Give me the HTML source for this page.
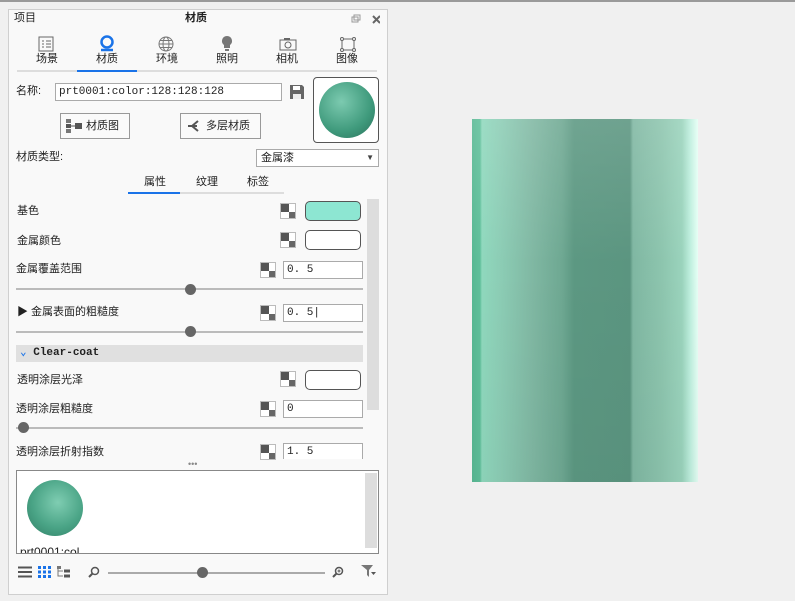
<!DOCTYPE html>
<html><head><meta charset="utf-8"><style>
*{box-sizing:border-box;margin:0;padding:0}
body{width:795px;height:601px;background:#f0f0f0;position:relative;overflow:hidden;font-family:"Liberation Sans","Noto Sans CJK SC",sans-serif;font-size:11px;color:#222;line-height:13px}
.a{position:absolute}
.panel{left:8px;top:9px;width:380px;height:586px;background:#f9f9f9;border:1px solid #cfcfcf}
.inp{background:#fff;border:1px solid #aaa;height:18px;font-family:"Liberation Mono","Noto Sans CJK SC",monospace;font-size:11px;padding-left:3px;line-height:16px}
.btn{background:#fafafa;border:1px solid #999;height:26px;line-height:24px;font-size:11px}
.sw{width:56px;height:20px;border:1px solid #555;border-radius:5px;background:#fff}
.chk{width:16px;height:16px;background:linear-gradient(90deg,#555 50%,#fff 50%) 0 0/16px 8px no-repeat,linear-gradient(90deg,#fff 50%,#666 50%) 0 8px/16px 8px no-repeat;border:1px solid #bbb}
.sl{height:2px;background:#bbb}
.knob{width:11px;height:11px;border-radius:50%;background:#666}
.lbl{font-size:11px;line-height:13px}
</style></head><body>
<div class="a" style="left:0;top:0;width:795px;height:2px;background:#9a9a9a"></div>
<div class="a panel"></div>
<div class="a lbl" style="left:14px;top:12px">项目</div>
<div class="a lbl" style="left:185px;top:12px;font-weight:bold">材质</div>
<svg class="a" style="left:350px;top:14px" width="30" height="12"><rect x="2" y="3" width="6" height="5" fill="none" stroke="#999"/><rect x="4" y="1" width="6" height="5" fill="none" stroke="#999"/><path d="M23 2l7 7M30 2l-7 7" stroke="#666" stroke-width="2"/></svg>
<svg class="a" style="left:38px;top:36px" width="16" height="16"><rect x="1" y="1" width="14" height="14" fill="none" stroke="#666"/><path d="M4 5h2M8 5h5M4 8h2M8 8h5M4 11h2M8 11h5" stroke="#666"/></svg>
<svg class="a" style="left:99px;top:35px" width="16" height="18"><circle cx="8" cy="7" r="5.5" fill="none" stroke="#1a73e8" stroke-width="2.5"/><path d="M2 15h12" stroke="#1a73e8" stroke-width="2.5"/></svg>
<svg class="a" style="left:158px;top:36px" width="16" height="16"><circle cx="8" cy="8" r="7" fill="none" stroke="#777"/><ellipse cx="8" cy="8" rx="3" ry="7" fill="none" stroke="#777"/><path d="M1 8h14M2 4.5h12M2 11.5h12" stroke="#777"/></svg>
<svg class="a" style="left:221px;top:35px" width="12" height="18"><path d="M6 1a5 5 0 0 1 3 9v3H3v-3A5 5 0 0 1 6 1z" fill="#777"/><rect x="4" y="14" width="4" height="2" fill="#777"/></svg>
<svg class="a" style="left:279px;top:37px" width="18" height="14"><rect x="1" y="3" width="16" height="10" fill="none" stroke="#666"/><rect x="5" y="1" width="6" height="2" fill="#666"/><circle cx="9" cy="8" r="3" fill="none" stroke="#666"/></svg>
<svg class="a" style="left:339px;top:36px" width="18" height="17"><rect x="3" y="3" width="12" height="11" fill="none" stroke="#666"/><g fill="#fff" stroke="#666"><circle cx="3" cy="3" r="1.5"/><circle cx="15" cy="3" r="1.5"/><circle cx="3" cy="14" r="1.5"/><circle cx="15" cy="14" r="1.5"/></g></svg>
<div class="a lbl" style="left:36px;top:53px">场景</div>
<div class="a lbl" style="left:96px;top:53px">材质</div>
<div class="a lbl" style="left:156px;top:53px">环境</div>
<div class="a lbl" style="left:216px;top:53px">照明</div>
<div class="a lbl" style="left:276px;top:53px">相机</div>
<div class="a lbl" style="left:336px;top:53px">图像</div>
<div class="a" style="left:17px;top:70px;width:360px;height:2px;background:#ddd"></div>
<div class="a" style="left:77px;top:70px;width:60px;height:2px;background:#1a73e8"></div>
<div class="a lbl" style="left:16px;top:85px">名称:</div>
<div class="a inp" style="left:55px;top:83px;width:227px">prt0001:color:128:128:128</div>
<svg class="a" style="left:289px;top:84px" width="16" height="16"><path d="M1 1h12l2 2v12H1z" fill="#666"/><rect x="4" y="2" width="7" height="4" fill="#fff"/><rect x="4" y="10" width="8" height="5" fill="#eee"/></svg>
<div class="a" style="left:313px;top:77px;width:66px;height:66px;border:1px solid #555;border-radius:4px;background:#fff"></div>
<div class="a" style="left:319px;top:82px;width:56px;height:56px;border-radius:50%;background:radial-gradient(circle at 40% 35%,#7ccab0,#3f9a7c 60%,#2f7a62 90%)"></div>
<div class="a btn" style="left:60px;top:113px;width:70px"><svg style="position:absolute;left:5px;top:5px" width="16" height="14"><rect x="0" y="0" width="5" height="4" fill="#777"/><rect x="0" y="5" width="5" height="4" fill="#555"/><rect x="0" y="10" width="5" height="4" fill="#777"/><rect x="9" y="4" width="7" height="6" fill="#555"/><path d="M5 7h4" stroke="#555"/></svg><span style="position:absolute;left:25px">材质图</span></div>
<div class="a btn" style="left:180px;top:113px;width:81px"><svg style="position:absolute;left:6px;top:5px" width="16" height="14"><path d="M1 7h9M5 7l6-5M5 7l6 5" stroke="#555" stroke-width="2" fill="none"/></svg><span style="position:absolute;left:25px">多层材质</span></div>
<div class="a lbl" style="left:16px;top:151px">材质类型:</div>
<div class="a" style="left:256px;top:149px;width:123px;height:18px;background:#fff;border:1px solid #aaa;padding-left:4px;line-height:16px">金属漆<span style="position:absolute;right:4px;top:0;font-size:8px;color:#444">▼</span></div>
<div class="a lbl" style="left:144px;top:176px">属性</div>
<div class="a lbl" style="left:196px;top:176px">纹理</div>
<div class="a lbl" style="left:247px;top:176px">标签</div>
<div class="a" style="left:128px;top:192px;width:156px;height:2px;background:#ddd"></div>
<div class="a" style="left:128px;top:192px;width:52px;height:2px;background:#1a73e8"></div>
<div class="a" style="left:367px;top:199px;width:12px;height:211px;background:#ddd"></div>
<div class="a lbl" style="left:17px;top:205px">基色</div>
<div class="a chk" style="left:280px;top:203px"></div>
<div class="a sw" style="left:305px;top:201px;background:#8de6d2"></div>
<div class="a lbl" style="left:17px;top:235px">金属颜色</div>
<div class="a chk" style="left:280px;top:232px"></div>
<div class="a sw" style="left:305px;top:230px"></div>
<div class="a lbl" style="left:16px;top:263px">金属覆盖范围</div>
<div class="a chk" style="left:260px;top:262px"></div>
<div class="a inp" style="left:283px;top:261px;width:80px">0. 5</div>
<div class="a sl" style="left:16px;top:288px;width:347px"></div>
<div class="a knob" style="left:185px;top:284px"></div>
<div class="a lbl" style="left:17px;top:306px">▶ 金属表面的粗糙度</div>
<div class="a chk" style="left:260px;top:305px"></div>
<div class="a inp" style="left:283px;top:304px;width:80px">0. 5|</div>
<div class="a sl" style="left:16px;top:331px;width:347px"></div>
<div class="a knob" style="left:185px;top:326px"></div>
<div class="a" style="left:16px;top:345px;width:347px;height:17px;background:#e0e0e0"></div>
<div class="a" style="left:20px;top:347px;font-family:'Liberation Mono',monospace;font-weight:bold;font-size:11px"><span style="color:#1a73e8">⌄</span> Clear-coat</div>
<div class="a lbl" style="left:17px;top:374px">透明涂层光泽</div>
<div class="a chk" style="left:280px;top:371px"></div>
<div class="a sw" style="left:305px;top:370px"></div>
<div class="a lbl" style="left:16px;top:403px">透明涂层粗糙度</div>
<div class="a chk" style="left:260px;top:401px"></div>
<div class="a inp" style="left:283px;top:400px;width:80px">0</div>
<div class="a sl" style="left:16px;top:427px;width:347px"></div>
<div class="a knob" style="left:18px;top:422px"></div>
<div class="a lbl" style="left:16px;top:446px">透明涂层折射指数</div>
<div class="a chk" style="left:260px;top:444px"></div>
<div class="a inp" style="left:283px;top:443px;width:80px;height:16px;border-bottom:none">1. 5</div>
<div class="a" style="left:188px;top:460px;color:#888;font-size:9px;line-height:8px">•••</div>
<div class="a" style="left:16px;top:470px;width:363px;height:84px;background:#fff;border:1px solid #888;overflow:hidden">
<div class="a" style="left:348px;top:2px;width:12px;height:75px;background:#ddd"></div>
<div class="a" style="left:10px;top:9px;width:56px;height:56px;border-radius:50%;background:radial-gradient(circle at 55% 40%,#7fcdb2,#4aa486 55%,#35856b 90%)"></div>
<div class="a" style="left:3px;top:74px;font-size:12px;line-height:14px">prt0001:col</div>
</div>
<svg class="a" style="left:18px;top:566px" width="14" height="12"><path d="M0 1.5h14M0 6h14M0 10.5h14" stroke="#555" stroke-width="2"/></svg>
<svg class="a" style="left:38px;top:566px" width="13" height="12"><g fill="#1a73e8"><rect x="0" y="0" width="3" height="3"/><rect x="5" y="0" width="3" height="3"/><rect x="10" y="0" width="3" height="3"/><rect x="0" y="4.5" width="3" height="3"/><rect x="5" y="4.5" width="3" height="3"/><rect x="10" y="4.5" width="3" height="3"/><rect x="0" y="9" width="3" height="3"/><rect x="5" y="9" width="3" height="3"/><rect x="10" y="9" width="3" height="3"/></g></svg>
<svg class="a" style="left:57px;top:566px" width="13" height="12"><path d="M1 0v10h5M1 5h5" stroke="#777" fill="none"/><rect x="0" y="0" width="4" height="3" fill="#777"/><rect x="7" y="3.5" width="6" height="3" fill="#555"/><rect x="7" y="8.5" width="6" height="3" fill="#555"/></svg>
<svg class="a" style="left:88px;top:566px" width="12" height="12"><circle cx="7" cy="5" r="3.5" fill="none" stroke="#555" stroke-width="1.5"/><path d="M4.5 7.5L1 11" stroke="#555" stroke-width="2"/></svg>
<div class="a" style="left:108px;top:572px;width:217px;height:2px;background:#aaa"></div>
<div class="a knob" style="left:197px;top:567px"></div>
<svg class="a" style="left:332px;top:566px" width="12" height="12"><circle cx="7" cy="5" r="3.5" fill="none" stroke="#555" stroke-width="1.5"/><path d="M5.5 5h3M7 3.5v3" stroke="#555"/><path d="M4.5 7.5L1 11" stroke="#555" stroke-width="2"/></svg>
<svg class="a" style="left:361px;top:564px" width="16" height="15"><path d="M0 1h12l-4 5v7l-2-2V6z" fill="#777"/><path d="M10 8l5 0-2.5 3z" fill="#555"/></svg>
<div class="a" style="left:472px;top:119px;width:226px;height:363px;background:linear-gradient(90deg,#58b893 0,#5fbf9a 8px,#8fd8bd 10px,#8ccdb5 28px,#80b8a3 60px,#6ea892 90px,#5c9882 102px,#5b9580 158px,#7fb7a2 161px,#8dc5ae 190px,#9ad3bc 210px,#bdeedd 218px,#e6fff5 226px)"></div>
<div class="a" style="left:472px;top:119px;width:226px;height:363px;background:linear-gradient(180deg,rgba(255,255,255,.12),rgba(255,255,255,0) 40%,rgba(0,0,0,.03))"></div>
</body></html>
